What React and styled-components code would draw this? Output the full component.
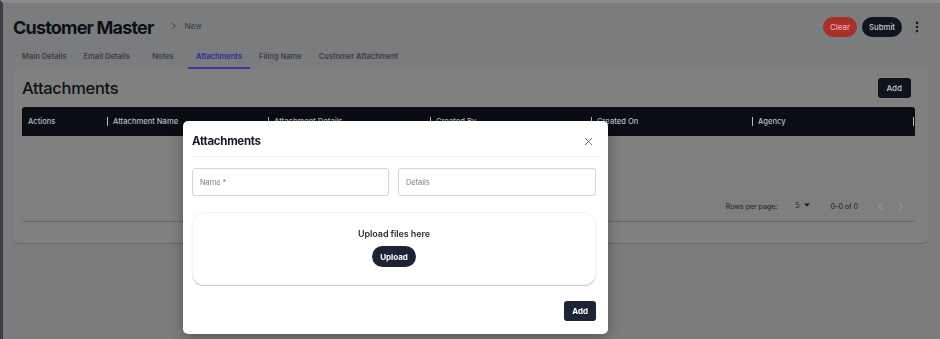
import styled, { createGlobalStyle } from "styled-components";
import { ChevronRight, ChevronLeft, X, EllipsisVertical } from "lucide-react";

const GlobalStyle = createGlobalStyle`
  html, body {
    margin: 0;
    padding: 0;
    background: #7b7c7e;
    font-family: Inter, "Liberation Sans", Arial, sans-serif;
  }
  * { box-sizing: border-box; }
`;

const tabs = ["Main Details", "Email Details", "Notes", "Attachments", "Filing Name", "Customer Attachment"];
const columns = ["Actions", "Attachment Name", "Attachment Details", "Created By", "Created On", "Agency", ""];

const App = () => {
  return (
    <>
      <GlobalStyle />
      <Shell>
        <Header>
          <Title>Customer Master</Title>
          <Crumb>
            <ChevronRight size={10} strokeWidth={2} />
            <span>New</span>
          </Crumb>
          <HeaderActions>
            <PillButton $danger>Clear</PillButton>
            <PillButton>Submit</PillButton>
            <KebabButton>
              <EllipsisVertical size={14} strokeWidth={2.5} />
            </KebabButton>
          </HeaderActions>
        </Header>

        <TabBar>
          {tabs.map((tab) => (
            <Tab key={tab} $active={tab === "Attachments"}>{tab}</Tab>
          ))}
        </TabBar>

        <Card>
          <CardHead>
            <CardTitle>Attachments</CardTitle>
            <SquareButton>Add</SquareButton>
          </CardHead>
          <Table>
            <HeadRow>
              {columns.map((col, index) => (
                <HeadCell key={`col-${index}`} $first={index === 0}>{col}</HeadCell>
              ))}
            </HeadRow>
            <TableBody />
            <Pagination>
              <span>Rows per page:</span>
              <RowsSelect>
                5
                <svg width="6" height="4" viewBox="0 0 6 4"><path d="M0 0.5h6L3 3.5z" fill="#1a1a1a" /></svg>
              </RowsSelect>
              <span className="range">0–0 of 0</span>
              <PageNav>
                <ChevronLeft size={11} strokeWidth={1.8} />
                <ChevronRight size={11} strokeWidth={1.8} />
              </PageNav>
            </Pagination>
          </Table>
        </Card>
      </Shell>

      <Modal>
        <ModalHead>
          <ModalTitle>Attachments</ModalTitle>
          <CloseButton><X size={13} strokeWidth={1.5} /></CloseButton>
        </ModalHead>
        <ModalDivider />
        <FieldRow>
          <Field>Name *</Field>
          <Field>Details</Field>
        </FieldRow>
        <DropZone>
          <DropText>Upload files here</DropText>
          <UploadButton>Upload</UploadButton>
        </DropZone>
        <ModalFooter>
          <SquareButton $modal>Add</SquareButton>
        </ModalFooter>
      </Modal>
    </>
  );
};

const Shell = styled.div`
  min-height: 100vh;
  border-left: 3px solid #3d3e45;
  border-top: 3px solid #8b8b8c;
  padding: 0 12px 0 10px;
`;

const Header = styled.div`
  display: flex;
  align-items: center;
  height: 20px;
  margin-top: 14px;
`;

const Title = styled.h1`
  margin: 0;
  font-size: 18px;
  font-weight: 700;
  letter-spacing: -0.8px;
  color: #0d1018;
`;

const Crumb = styled.div`
  display: flex;
  align-items: center;
  gap: 6px;
  margin-left: 15px;
  color: #2a2c31;
  font-size: 8px;
  margin-top: -2px;

  span {
    color: #36383d;
  }
`;

const HeaderActions = styled.div`
  margin-left: auto;
  margin-right: 4px;
  display: flex;
  align-items: center;
  gap: 5px;
`;

const PillButton = styled.button`
  height: 20px;
  padding: 0 7px;
  border: none;
  border-radius: 10px;
  font-family: inherit;
  font-size: 7.8px;
  font-weight: 500;
  background: ${(p) => (p.$danger ? "#aa2f27" : "#10141d")};
  color: ${(p) => (p.$danger ? "#e6b3ad" : "#c9cbd0")};
`;

const KebabButton = styled.div`
  display: flex;
  align-items: center;
  justify-content: center;
  width: 14px;
  margin-left: 3px;
  color: #1c1d21;
`;

const TabBar = styled.div`
  display: flex;
  gap: 1px;
  height: 23px;
  margin-top: 9px;
  padding-left: 1px;
`;

const Tab = styled.div`
  display: flex;
  align-items: center;
  justify-content: center;
  min-width: 48px;
  padding: 0 8px;
  font-size: 7.5px;
  font-weight: 600;
  color: ${(p) => (p.$active ? "#302b9a" : "#3b3e45")};
  border-bottom: 2px solid ${(p) => (p.$active ? "#3a34b0" : "transparent")};
`;

const Card = styled.div`
  background: #808080;
  border-radius: 6px;
  padding: 9px 13px 22px 9px;
  box-shadow: 0 1px 1px rgba(0, 0, 0, 0.18);
`;

const CardHead = styled.div`
  display: flex;
  align-items: center;
  justify-content: space-between;
  height: 20px;
  padding-right: 4px;
  margin-bottom: 9px;
`;

const CardTitle = styled.h2`
  margin: 0;
  font-size: 16.5px;
  font-weight: 500;
  letter-spacing: -0.3px;
  color: #0e1016;
`;

const SquareButton = styled.button`
  height: 20px;
  padding: 0 ${(p) => (p.$modal ? "8px" : "9px")};
  border: none;
  border-radius: 3px;
  font-family: inherit;
  font-size: 8px;
  font-weight: ${(p) => (p.$modal ? 700 : 500)};
  background: ${(p) => (p.$modal ? "#1b2335" : "#0e131c")};
  color: ${(p) => (p.$modal ? "#ffffff" : "#c5c7cc")};
`;

const Table = styled.div`
  border-radius: 3px;
  overflow: hidden;
  box-shadow: 0 1px 1px rgba(0, 0, 0, 0.22);
`;

const HeadRow = styled.div`
  display: grid;
  grid-template-columns: 85px 161px 162px 161px 161px 161px 1fr;
  height: 29px;
  background: #0a0d14;
`;

const HeadCell = styled.div`
  position: relative;
  display: flex;
  align-items: center;
  padding-left: 6px;
  font-size: 7.6px;
  font-weight: 500;
  color: #b9bbc0;
  white-space: nowrap;
  overflow: hidden;

  &::before {
    content: "";
    display: ${(p) => (p.$first ? "none" : "block")};
    position: absolute;
    left: 0;
    top: 10px;
    height: 9px;
    width: 1px;
    background: #b9bbc0;
  }
`;

const TableBody = styled.div`
  height: 56px;
  background: #7f7f7f;
`;

const Pagination = styled.div`
  display: flex;
  align-items: center;
  justify-content: flex-end;
  height: 29px;
  padding-right: 8px;
  font-size: 7.2px;
  letter-spacing: -0.1px;
  color: #1d1f24;
  background: #7f7f7f;

  .range {
    margin-left: 21px;
  }
`;

const RowsSelect = styled.div`
  display: flex;
  align-items: center;
  gap: 4px;
  margin-left: 18px;
  margin-top: -3px;
`;

const PageNav = styled.div`
  display: flex;
  align-items: center;
  gap: 10px;
  margin-left: 17px;
  color: #aeafb2;
`;

const Modal = styled.div`
  position: fixed;
  left: 183px;
  top: 121px;
  width: 425px;
  background: #ffffff;
  border-radius: 5px;
  padding: 9px 12px 13px 9px;
  box-shadow: 0 4px 14px rgba(0, 0, 0, 0.3);
`;

const ModalHead = styled.div`
  display: flex;
  align-items: center;
  justify-content: space-between;
  height: 22px;
  margin-bottom: 4px;
`;

const ModalTitle = styled.h3`
  margin: 0;
  font-size: 11.5px;
  font-weight: 700;
  letter-spacing: -0.3px;
  color: #161a25;
`;

const CloseButton = styled.div`
  display: flex;
  color: #4a4c52;
  margin-right: 1px;
`;

const ModalDivider = styled.div`
  height: 1px;
  margin-right: -3px;
  background: #eceef1;
`;

const FieldRow = styled.div`
  display: grid;
  grid-template-columns: 197px 1fr;
  gap: 9px;
  margin-top: 11px;
`;

const Field = styled.div`
  display: flex;
  align-items: center;
  height: 28px;
  padding-left: 7px;
  border: 1px solid #d3d5d9;
  border-radius: 3px;
  font-size: 7.4px;
  color: #7b7e86;
`;

const DropZone = styled.div`
  display: flex;
  flex-direction: column;
  align-items: center;
  height: 73px;
  margin-top: 16px;
  padding-top: 14px;
  border: 1px solid #f4f4f6;
  border-radius: 12px;
  box-shadow: 0 1.5px 1px -0.5px rgba(0, 0, 0, 0.22);
`;

const DropText = styled.div`
  height: 14px;
  line-height: 14px;
  font-size: 9px;
  font-weight: 600;
  letter-spacing: -0.1px;
  color: #2c2f38;
`;

const UploadButton = styled.button`
  height: 21px;
  margin-top: 5px;
  padding: 0 8px;
  border: none;
  border-radius: 11px;
  font-family: inherit;
  font-size: 8px;
  font-weight: 700;
  background: #1b2335;
  color: #ffffff;
`;

const ModalFooter = styled.div`
  display: flex;
  justify-content: flex-end;
  margin-top: 16px;
`;

export default App;
